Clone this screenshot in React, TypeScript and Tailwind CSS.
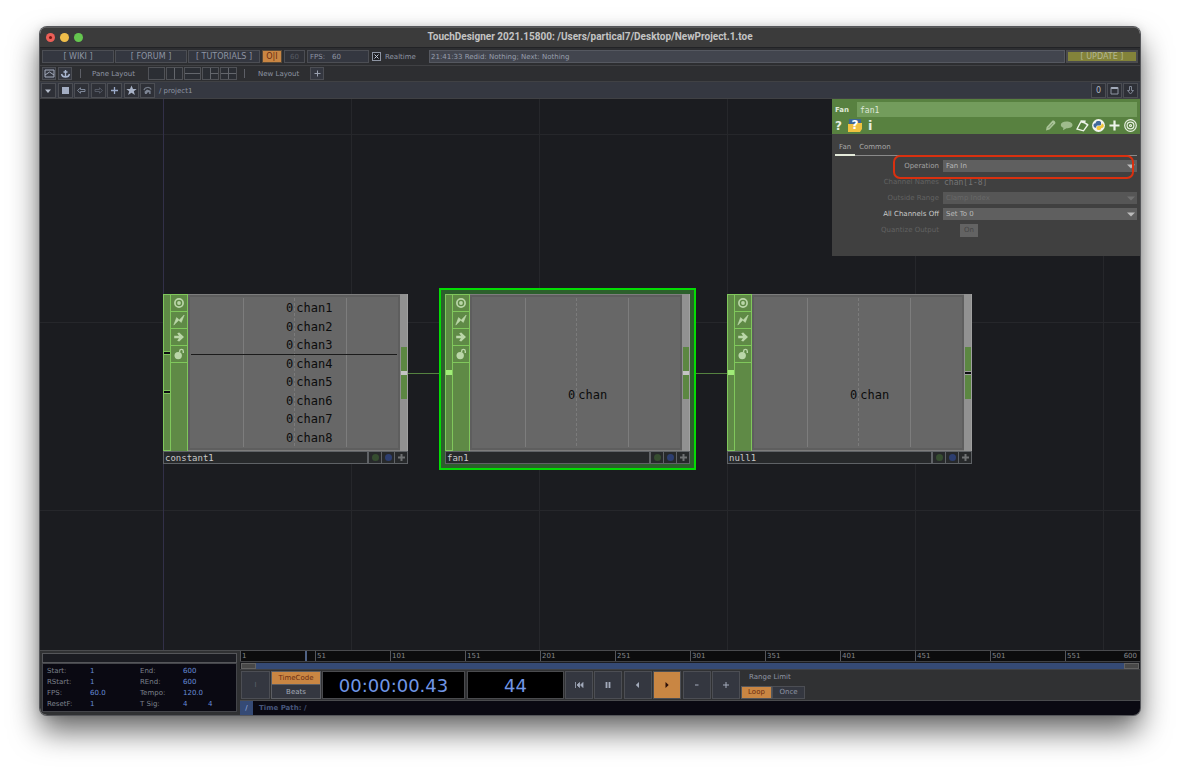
import { useState } from "react";
import type { ReactNode } from "react";

const MONO = "font-['DejaVu_Sans_Mono','Liberation_Mono',monospace]";
const BOX = "flex items-center justify-center border border-[#4c4e54]";
const BTN = `${BOX} bg-[#343740] text-[#8e95a3]`;

const paneLayouts = [
    "",
    "M8.5 0V12",
    "M0 6H17",
    "M8.5 0V12M8.5 6H17",
    "M8.5 0V12M0 6H17",
];

const navIcons: { label: string; icon: ReactNode }[] = [
    { label: "History", icon: <path d="M2 4.5H8L5 8Z" fill="#b4bccb" /> },
    { label: "Stop", icon: <rect x="2" y="2" width="7" height="7" fill="#a3adc2" /> },
    { label: "Back", icon: <path d="M1.5 5.5L4.5 2.8V4.5H9V6.5H4.5V8.2Z" fill="none" stroke="#7e8798" /> },
    { label: "Forward", icon: <path d="M9.5 5.5L6.5 2.8V4.5H2V6.5H6.5V8.2Z" fill="none" stroke="#545965" /> },
    { label: "Add", icon: <path d="M5.5 2V9M2 5.5H9" stroke="#9aa9c8" strokeWidth="1.3" /> },
    { label: "Bookmark", icon: <path d="M5.5 0.5L7 4H10.7L7.8 6.3L8.9 10L5.5 7.8L2.1 10L3.2 6.3L0.3 4H4Z" fill="#a8b2c6" /> },
    {
        label: "Home",
        icon: (
            <g>
                <path d="M2 5.2C2.5 2.2 7.8 1.2 9.2 4.6" fill="none" stroke="#747b88" strokeWidth="1.2" />
                <path d="M2.5 6.8L5 4.6L8.6 5.8V9H7.2V7.2H5.8L4.6 9H3Z" fill="#7d8594" />
            </g>
        ),
    },
];

const nodeIcons: ReactNode[] = [
    <g fill="none" stroke="#bad6a8">
        <circle cx="6" cy="6" r="4.1" strokeWidth="1.7" />
        <circle cx="6" cy="6" r="1.9" fill="#bad6a8" stroke="none" />
    </g>,
    <path d="M0.8 11L3.6 3.6L6.3 6L11.2 1L8.3 8.4L5.7 6.2Z" fill="#bad6a8" stroke="#bad6a8" strokeWidth="0.6" />,
    <path d="M1.2 4.8H6L4.2 2.2L6.2 1.6L11 6L6.2 10.4L4.2 9.8L6 7.2H1.2Z" fill="#bad6a8" />,
    <g>
        <circle cx="5.2" cy="7.6" r="3.7" fill="#bad6a8" />
        <path d="M6.6 4.5V3.2C6.8 0.8 10.2 0.8 10.3 3.2V5" fill="none" stroke="#bad6a8" strokeWidth="1.4" />
    </g>,
];

const channels = ["chan1", "chan2", "chan3", "chan4", "chan5", "chan6", "chan7", "chan8"];

const timeSettings = [
    ["Start:", "1", "End:", "600", ""],
    ["RStart:", "1", "REnd:", "600", ""],
    ["FPS:", "60.0", "Tempo:", "120.0", ""],
    ["ResetF:", "1", "T Sig:", "4", "4"],
];

const transport: { label: string; icon: ReactNode }[] = [
    { label: "Rewind", icon: <path d="M2.5 3V9M6.5 3.5L4 6L6.5 8.5ZM10 3.5L7.5 6L10 8.5Z" fill="#a3abbb" stroke="#a3abbb" strokeWidth="0.8" /> },
    { label: "Pause", icon: <path d="M4.5 3V9M7.5 3V9" stroke="#a3abbb" strokeWidth="1.8" /> },
    { label: "Play backwards", icon: <path d="M7 3L3.8 6L7 9Z" fill="#a3abbb" /> },
    { label: "Play", icon: <path d="M4.5 3L7.7 6L4.5 9Z" fill="#2c0f08" /> },
    { label: "Step back", icon: <path d="M4 6H7.5" stroke="#a3abbb" /> },
    { label: "Step forward", icon: <path d="M3 6H9M6 3V9" stroke="#a3abbb" /> },
];

const rulerMarks = [1, 51, 101, 151, 201, 251, 301, 351, 401, 451, 501, 551];

function Svg({ size = 11, children }: { size?: number; children: ReactNode }) {
    return (
        <svg width={size} height={size} viewBox={`0 0 ${size} ${size}`} aria-hidden="true">
            {children}
        </svg>
    );
}

function TitleBar() {
    return (
        <header className="grid h-5 grid-cols-[1fr_auto_1fr] items-center border-t border-[#5c5c5c] bg-[#3b3b3b] pb-px">
            <div className="flex gap-[5px] pl-[6px]">
                <button aria-label="Close" className="flex h-[9px] w-[9px] items-center justify-center rounded-full bg-[#ec5f57]">
                    <span className="h-[3px] w-[3px] rounded-full bg-[#7c1510]" />
                </button>
                <button aria-label="Minimize" className="h-[9px] w-[9px] rounded-full bg-[#f0be4a]" />
                <button aria-label="Zoom" className="h-[9px] w-[9px] rounded-full bg-[#65c64f]" />
            </div>
            <h1 className="font-[Roboto,sans-serif] text-[10px] font-bold text-[#c4c4c4]">
                TouchDesigner 2021.15800: /Users/partical7/Desktop/NewProject.1.toe
            </h1>
        </header>
    );
}

function MainBar() {
    return (
        <div className="flex h-[18px] items-center border-t border-[#222326] bg-[#2d2e31] px-[2px] text-[#8e95a3]">
            <nav className="flex gap-px text-[8px]">
                {["WIKI", "FORUM", "TUTORIALS"].map((name) => (
                    <a key={name} href="#" className={`${BTN} h-[13px] w-[72px] pt-px`}>[ {name} ]</a>
                ))}
            </nav>
            <button className="ml-[2px] h-[13px] w-[20px] border border-[#5a4a38] bg-[#c98643] pt-px text-[8px] text-[#6b2c10]">O|I</button>
            <button className={`${BOX} ml-[2px] h-[13px] w-[21px] bg-[#303239] pt-px text-[#565a63]`}>60</button>
            <div className="ml-[2px] flex h-[13px] w-[62px] items-center gap-[7px] border border-[#4c4e54] bg-[#343740] pt-px pl-[2px]">
                <span>FPS:</span>
                <span>60</span>
            </div>
            <label className="relative ml-[3px] flex items-center gap-1">
                <input type="checkbox" defaultChecked className="peer h-[9px] w-[9px] appearance-none border border-[#8e95a3] bg-[#1f2024]" />
                <svg className="pointer-events-none absolute left-0 hidden peer-checked:block" width="9" height="9">
                    <path d="M2.5 2.5L6.5 6.5M6.5 2.5L2.5 6.5" stroke="#c2cad8" />
                </svg>
                <span className="w-[42px] pt-[2px]">Realtime</span>
            </label>
            <div className="ml-[2px] flex h-[13px] flex-1 items-center border border-[#555860] bg-[#42454e] pt-[2px] pl-px text-[#989fad]">
                21:41:33 Redid: Nothing; Next: Nothing
            </div>
            <button className="ml-px h-[13px] w-[72px] border-2 border-[#4a4b4d] bg-[#83833a] pt-px text-[8px] text-[#b3b793]">[ UPDATE ]</button>
        </div>
    );
}

function LayoutBar() {
    return (
        <div className="flex h-4 items-center border-t border-[#404144] bg-[#2d2e31] px-[2px] text-[#8e95a3]">
            <button aria-label="Palette" className={`${BTN} h-[13px] w-[14px]`}>
                <Svg>
                    <path d="M1 2H10V9H1ZM1 7L5.5 4L10 7" fill="none" stroke="#a3abbb" />
                </Svg>
            </button>
            <button aria-label="Anchor" className={`${BTN} ml-[2px] h-[13px] w-[14px]`}>
                <Svg>
                    <path d="M5.5 2V9M3.5 4H7.5M1.5 6C2 8.5 4 9 5.5 9S9 8.5 9.5 6" fill="none" stroke="#a9b7d0" strokeWidth="1.4" />
                </Svg>
            </button>
            <span className="ml-[8px] h-[9px] w-px bg-[#5d5f66]" />
            <span className="ml-[11px] w-[56px] pt-[2px]">Pane Layout</span>
            <div className="flex gap-px">
                {paneLayouts.map((d, i) => (
                    <button key={i} aria-label={`Pane layout ${i + 1}`} className="h-[13px] w-[17px] border border-[#505257] bg-[#2b2e34]">
                        <svg width="15" height="11" viewBox="1 0.5 15 11">
                            <path d={d} stroke="#63666c" />
                        </svg>
                    </button>
                ))}
            </div>
            <span className="ml-[7px] h-[9px] w-px bg-[#5d5f66]" />
            <span className="ml-[13px] w-[52px] pt-[2px]">New Layout</span>
            <button aria-label="New layout" className={`${BTN} h-[13px] w-[14px]`}>
                <Svg>
                    <path d="M5.5 2.5V8.5M2.5 5.5H8.5" stroke="#9aa1b0" />
                </Svg>
            </button>
        </div>
    );
}

function PathBar() {
    return (
        <div className="flex h-[18px] items-center border-y border-[#404144] bg-[#353841] pr-[2px] pl-px text-[#8e95a3]">
            <div className="flex w-[114px] justify-between">
                {navIcons.map(({ label, icon }) => (
                    <button key={label} aria-label={label} className={`${BOX} h-[15px] w-[15px] bg-[#2e3037]`}>
                        <Svg>{icon}</Svg>
                    </button>
                ))}
            </div>
            <span className="ml-1 flex-1 pt-[2px]">/ project1</span>
            <div className="flex gap-px text-[8px]">
                <button className={`${BOX} h-[15px] w-[15px] bg-[#2e3037] pt-px text-[#b0b7c5]`}>0</button>
                <button aria-label="Maximize pane" className={`${BOX} h-[15px] w-[15px] bg-[#2e3037]`}>
                    <Svg>
                        <path d="M2 2.5H9M2 3.5H9" stroke="#a3abbb" />
                        <path d="M2 2.5V9H9V2.5" fill="none" stroke="#8e95a3" />
                    </Svg>
                </button>
                <button aria-label="Collapse pane" className={`${BOX} h-[15px] w-[15px] bg-[#2e3037]`}>
                    <Svg>
                        <path d="M4.5 1.5H6.5V5.5H8.5L5.5 9L2.5 5.5H4.5Z" fill="none" stroke="#7e8594" />
                    </Svg>
                </button>
            </div>
        </div>
    );
}

type NodeProps = {
    name: string;
    className: string;
    input: "open" | "wired";
    wiredOutput?: boolean;
    channelNames?: string[];
    selected?: boolean;
};

function OpNode({ name, className, input, wiredOutput, channelNames, selected }: NodeProps) {
    return (
        <section
            className={`absolute flex h-[170px] w-[245px] flex-col ${className} ${selected ? "ring-4 ring-[#2c602c] outline-2 outline-offset-4 outline-[#04dc04]" : ""}`}
        >
            <div className="flex min-h-0 flex-1">
                {/* input connectors */}
                <div className="flex w-2 flex-col items-stretch border border-[#80c75c] bg-[#5f8a46]">
                    {input === "wired" ? (
                        <span className="mt-[75px] h-[5px] bg-[#a1ec78]" />
                    ) : (
                        <>
                            <span className="mt-[56px] h-[4px] border-y border-[#80c75c] bg-[#0d0d10]" />
                            <span className="mt-[35px] h-[4px] border-y border-[#80c75c] bg-[#0d0d10]" />
                        </>
                    )}
                </div>
                <div className="flex w-[17px] flex-col border-t border-r border-[#80c75c] bg-[#5f8a46]">
                    {["Viewer", "Bypass", "Export", "Lock"].map((label, i) => (
                        <button key={label} aria-label={label} className="flex h-[17px] items-center justify-center border-b border-[#80c75c]">
                            <Svg size={12}>{nodeIcons[i]}</Svg>
                        </button>
                    ))}
                </div>
                <div className="relative flex-1 border-y border-[#7d7d7d] bg-[#5e5e5e] p-[2px]">
                    <div className="h-full bg-[#676767]">
                        <svg className="absolute top-0 left-0 h-full w-full" aria-hidden="true">
                            <path d="M55.5 3V152M158.5 3V152" stroke="#7d7d7d" />
                            <path d="M106.5 3V152" stroke="#7b7b7b" strokeDasharray="3 2" />
                            {channelNames && <path d="M3 59.5H209" stroke="#1b1b1b" />}
                        </svg>
                        <div className={`relative ${MONO} text-[12px] text-[#0c0c0c]`}>
                            {channelNames ? (
                                <ul className="flex flex-col pt-px">
                                    {channelNames.map((channel) => (
                                        <li key={channel} className="flex h-[19px] items-center gap-[3px] pl-[96px] not-first:-mt-px odd:h-5">
                                            <span>0</span>
                                            <span>{channel}</span>
                                        </li>
                                    ))}
                                </ul>
                            ) : (
                                <p className="flex items-center gap-[3px] pt-[92px] pl-[96px]">
                                    <span>0</span>
                                    <span>chan</span>
                                </p>
                            )}
                        </div>
                    </div>
                </div>
                {/* output connector */}
                <div className="flex w-2 flex-col justify-center border-r border-[#a0a0a0] bg-[#919191] pl-px">
                    <span className="h-[24px] bg-[#5c8742]" />
                    <span className={`h-[4px] ${wiredOutput ? "bg-[#c4c4c4]" : "border-y border-[#a0a0a0] bg-[#0d0d10]"}`} />
                    <span className="h-[24px] bg-[#5c8742]" />
                </div>
            </div>
            <footer className="flex h-[13px] border border-[#5f6266] bg-[#27292b]">
                <span className={`flex flex-1 items-center border-r border-[#5f6266] pt-[2px] pl-px ${MONO} text-[9px] text-[#c8c8c8]`}>{name}</span>
                <span className="flex w-[14px] items-center justify-center border-r border-l border-[#5f6266]">
                    <span className="h-[7px] w-[7px] rounded-full bg-[#364d30]" />
                </span>
                <span className="flex w-[13px] items-center justify-center border-r border-[#5f6266]">
                    <span className="h-[7px] w-[7px] rounded-full bg-[#2d3e70]" />
                </span>
                <span className="flex w-[12px] items-center justify-center">
                    <svg width="9" height="9">
                        <path d="M4.5 1V8M1 4.5H8" stroke="#6f7173" strokeWidth="2" />
                    </svg>
                </span>
            </footer>
        </section>
    );
}

function ParamMenu({ id, label, options, disabled, bright }: { id: string; label: string; options: string[]; disabled?: boolean; bright?: boolean }) {
    return (
        <div className="flex h-3 items-center">
            <label htmlFor={id} className={`w-[104px] pt-px text-right ${disabled ? "text-[#626262]" : bright ? "text-[#cacaca]" : "text-[#a3a3a3]"}`}>
                {label}
            </label>
            <div className="relative ml-1 flex-1">
                <select
                    id={id}
                    disabled={disabled}
                    className={`block h-3 w-full appearance-none pt-px pl-[3px] ${disabled ? "bg-[#565656] text-[#686868] opacity-100" : "bg-[#5f5f5f] text-[#b8b8b8]"}`}
                >
                    {options.map((option) => (
                        <option key={option}>{option}</option>
                    ))}
                </select>
                <svg className="pointer-events-none absolute top-1 right-[2px]" width="8" height="5">
                    <path d="M0 0.5H8L4 4.5Z" fill={disabled ? "#707070" : "#bcbcbc"} />
                </svg>
            </div>
        </div>
    );
}

function ParameterPanel() {
    const [tab, setTab] = useState("Fan");

    return (
        <aside className="absolute top-0 right-0 h-[157px] w-[308px] bg-[#404040]">
            <div className="h-[35px] bg-[#588140] pt-[3px] pr-[3px] pl-[3px]">
                <div className="flex h-[15px] items-center">
                    <label htmlFor="op-name" className="w-[22px] pt-px font-bold text-[#dfe8d8]">Fan</label>
                    <input id="op-name" defaultValue="fan1" className={`h-full min-w-0 flex-1 bg-[#739c5c] pt-px pl-[3px] ${MONO} text-[8px] text-[#dfe8d8]`} />
                </div>
                <div className="flex h-[17px] items-center">
                    <button aria-label="Help" className="w-[13px] text-left text-[12px] font-bold text-[#e6eee0]">?</button>
                    <button aria-label="Python help" className="relative h-[13px] w-[14px]">
                        <svg className="absolute inset-0" width="14" height="13">
                            <path d="M1 0H13V6H1Z" fill="#3c6696" />
                            <path d="M0 5H6L8 4H14V10L12 13H0Z" fill="#efc140" />
                        </svg>
                        <span className="relative text-[12px] leading-[13px] font-bold text-white">?</span>
                    </button>
                    <button aria-label="Info" className="ml-[6px] text-[13px] font-bold text-[#e6eee0]">i</button>
                    <div className="ml-auto flex items-center gap-[3px]">
                        <button aria-label="Edit">
                            <Svg size={13}>
                                <path d="M2 11.5L2.6 8L8.3 1.8C9.5 0.8 12.2 3 11.2 4.6L5.5 10.6Z" fill="#a9c397" />
                                <path d="M4.5 9L9 4" stroke="#7c9c68" />
                            </Svg>
                        </button>
                        <button aria-label="Comment">
                            <Svg size={13}>
                                <path d="M6.5 2.5C10 2.5 12.5 3.8 12.5 6S10 9.3 6.5 9.3L3 11.3L3.4 8.8C1.5 8 0.8 7 0.8 6C0.8 3.8 3 2.5 6.5 2.5Z" fill="#9fbb8c" />
                            </Svg>
                        </button>
                        <button aria-label="Copy parameters">
                            <Svg size={13}>
                                <path d="M5 2.5L1 10L7.5 11.8L12 5.5" fill="none" stroke="#eef3ea" strokeWidth="1.4" />
                                <path d="M4.5 1.2L9.8 1.6L9.3 3.4L12.6 5.2L11.4 6.6L8.2 4.4L4.8 3.4Z" fill="#eef3ea" />
                            </Svg>
                        </button>
                        <button aria-label="Python">
                            <Svg size={13}>
                                <circle cx="6.5" cy="6.5" r="6.4" fill="#f2f4f0" />
                                <path d="M3.8 3.2C4.4 1.6 8.6 1.6 9 3.2V5.4C8.8 6.6 7 6.3 5.6 6.4C4.2 6.6 4.3 8 4 8.8C2 9 1.2 7.4 1.5 5.8C1.8 4.4 3 4.3 3.8 4.2Z" fill="#41699c" />
                                <path d="M9.2 9.8C8.6 11.4 4.9 11.4 4.6 9.8V8.2C4.8 6.9 6.4 7.1 7.8 7C9.4 6.9 9.5 5.6 9.6 4.4C11.3 4.2 12 5.6 11.7 7.4C11.4 8.8 10.2 9 9.2 9Z" fill="#f0c63a" />
                            </Svg>
                        </button>
                        <button aria-label="Add parameter">
                            <Svg size={13}>
                                <path d="M6.5 1.5V11.5M1.5 6.5H11.5" stroke="#eef3ea" strokeWidth="2.2" />
                            </Svg>
                        </button>
                        <button aria-label="Target">
                            <Svg size={13}>
                                <g fill="none" stroke="#e6eee0" strokeWidth="1.2">
                                    <circle cx="6.5" cy="6.5" r="5.8" />
                                    <circle cx="6.5" cy="6.5" r="3.4" />
                                    <circle cx="6.5" cy="6.5" r="1" />
                                </g>
                            </Svg>
                        </button>
                    </div>
                </div>
            </div>
            <div className="px-[3px]">
                <div className="mt-[7px] flex h-[15px] border-b border-[#8a8a8a] text-[#a8a8a8]">
                    {["Fan", "Common"].map((name) => (
                        <button
                            key={name}
                            onClick={() => setTab(name)}
                            className={`h-[15px] border-b-2 px-1 ${name === tab ? "border-[#e4eada]" : "border-transparent"}`}
                        >
                            {name}
                        </button>
                    ))}
                </div>
                <div className="relative flex flex-col gap-1 pt-1">
                    <ParamMenu id="operation" label="Operation" options={["Fan In", "Fan Out"]} />
                    <div className="flex h-3 items-center">
                        <label htmlFor="channel-names" className="w-[104px] pt-px text-right text-[#626262]">Channel Names</label>
                        <input id="channel-names" disabled defaultValue="chan[1-8]" className={`ml-1 h-3 min-w-0 flex-1 pt-px pl-px ${MONO} text-[8px] text-[#757575]`} />
                    </div>
                    <ParamMenu id="outside-range" label="Outside Range" options={["Clamp Index"]} disabled />
                    <ParamMenu id="channels-off" label="All Channels Off" options={["Set To 0", "Set To -1"]} bright />
                    <div className="flex h-3 items-center">
                        <span id="quantize" className="w-[104px] pt-px text-right text-[#626262]">Quantize Output</span>
                        <button aria-labelledby="quantize" disabled className="ml-[21px] h-[13px] w-[18px] bg-[#636363] pt-px text-[#454545]">On</button>
                    </div>
                    {/* highlight around the operation menu */}
                    <div className="pointer-events-none absolute -top-px right-[3px] h-[24px] w-[241px] rounded-[7px] border-2 border-[#d9300f]" />
                </div>
            </div>
        </aside>
    );
}

function Network() {
    return (
        <main className="relative min-h-[551px] flex-1 overflow-hidden bg-[#1b1c20] bg-[linear-gradient(to_right,#26272b_1px,transparent_1px),linear-gradient(to_bottom,#26272b_1px,transparent_1px)] bg-[size:188px_188px] bg-[position:123px_35px]">
            <div className="absolute inset-y-0 left-[123px] w-px bg-[#323048]" />
            <div className="absolute top-[274px] left-[368px] h-px w-[320px] bg-[#558240]" />
            <OpNode name="constant1" className="top-[195px] left-[123px]" input="open" wiredOutput channelNames={channels} />
            <OpNode name="fan1" className="top-[195px] left-[405px]" input="wired" wiredOutput selected />
            <OpNode name="null1" className="top-[195px] left-[687px]" input="wired" />
            <ParameterPanel />
        </main>
    );
}

function Timeline() {
    const [playing, setPlaying] = useState("Play");
    const frame = 44;
    const start = 1;
    const end = 600;

    return (
        <footer className="flex h-[65px] border-t border-[#4a4b4e] bg-[#303133]">
            <div className="flex w-[200px] flex-col px-[2px] pt-[2px] pb-[3px]">
                <div className="h-[10px] w-[195px] border border-[#55565a] bg-[#1b1c22]" />
                <div className="grid w-[195px] flex-1 auto-rows-[11px] grid-cols-[43px_50px_43px_25px_1fr] content-center items-center border border-[#44454a] bg-[#0a0912] pt-px pl-1 text-[#7c818c]">
                    {timeSettings.flatMap((row) =>
                        row.map((cell, i) => (
                            <span key={row[0] + i} className={i === 1 || i > 2 ? "text-[#668bd8]" : ""}>{cell}</span>
                        ))
                    )}
                </div>
            </div>
            <div className="flex min-w-0 flex-1 flex-col">
                <div className="relative flex h-[10px] bg-[#0c0c0d] text-[#85878c]">
                    {rulerMarks.map((mark) => (
                        <span key={mark} className="flex flex-1 items-center border-l border-[#55565a] pl-px">{mark}</span>
                    ))}
                    <span className="absolute right-[3px] leading-[10px]">{end}</span>
                    <span className="absolute inset-y-0 w-[2px] bg-[#4f6285]" style={{ left: `${((frame - start) / (end - start)) * 100}%` }} />
                </div>
                <div className="flex h-[9px] items-center border-y border-[#404144] bg-[#1b1c20] px-px">
                    <span className="h-[6px] w-[15px] border border-[#636363] bg-[#484848]" />
                    <span className="h-[6px] flex-1 bg-[#354a75]" />
                    <span className="h-[6px] w-[15px] border border-[#636363] bg-[#484848]" />
                </div>
                <div className="flex h-[31px] items-center gap-px border-b border-[#4a4b4e] pl-px">
                    <button className={`${BOX} h-[28px] w-[29px] bg-[#343740] text-[#5f636d]`}>I</button>
                    <div className="flex h-[28px] w-[50px] flex-col border border-[#5c5e63]">
                        <button className="flex-1 bg-[#c98643] text-[#6b2c10]">TimeCode</button>
                        <button className="flex-1 border-t border-[#5c5e63] bg-[#343740] pt-px text-[#a3a9b6]">Beats</button>
                    </div>
                    <div className="flex h-[28px] w-[143px] items-center justify-center border border-[#4a4b4e] bg-black pt-[2px] text-[18px] text-[#7196e6]">
                        00:00:00.43
                    </div>
                    <div className="ml-px flex h-[28px] w-[97px] items-center justify-center border border-[#4a4b4e] bg-black pt-[2px] text-[18px] text-[#7196e6]">
                        {frame}
                    </div>
                    <div className="flex w-[175px] justify-between">
                        {transport.map(({ label, icon }) => (
                            <button
                                key={label}
                                aria-label={label}
                                onClick={() => setPlaying(label)}
                                className={`${BOX} h-[28px] w-[28px] ${playing === label ? "bg-[#c98643]" : "bg-[#343740]"}`}
                            >
                                <Svg size={12}>{icon}</Svg>
                            </button>
                        ))}
                    </div>
                    <div className="flex h-[28px] flex-col justify-between text-[#8e95a3]">
                        <span className="pt-[3px] pl-[8px]">Range Limit</span>
                        <div className="flex">
                            <button className="h-[13px] w-[31px] border border-[#55565a] bg-[#c98643] text-[#6b2c10]">Loop</button>
                            <button className={`${BTN} h-[13px] w-[33px]`}>Once</button>
                        </div>
                    </div>
                </div>
                <div className="flex flex-1 items-center bg-[#0a0912] font-bold text-[#46557b]">
                    <span className="flex h-full w-[13px] items-center justify-center bg-[#354a75] font-normal text-[#9db3e0]">/</span>
                    <span className="pl-[6px]">Time Path: /</span>
                </div>
            </div>
        </footer>
    );
}

export default function App() {
    return (
        <div className="flex min-h-screen flex-col bg-white px-10 pt-[27px] pb-[53px]">
            <div className="flex flex-1 flex-col overflow-hidden rounded-[7px] font-['DejaVu_Sans',Verdana,sans-serif] text-[7px] leading-none shadow-[0_0_0_1px_#55565a,0_16px_30px_rgba(0,0,0,0.6),0_0_10px_rgba(0,0,0,0.15)]">
                <TitleBar />
                <MainBar />
                <LayoutBar />
                <PathBar />
                <Network />
                <Timeline />
            </div>
        </div>
    );
}
